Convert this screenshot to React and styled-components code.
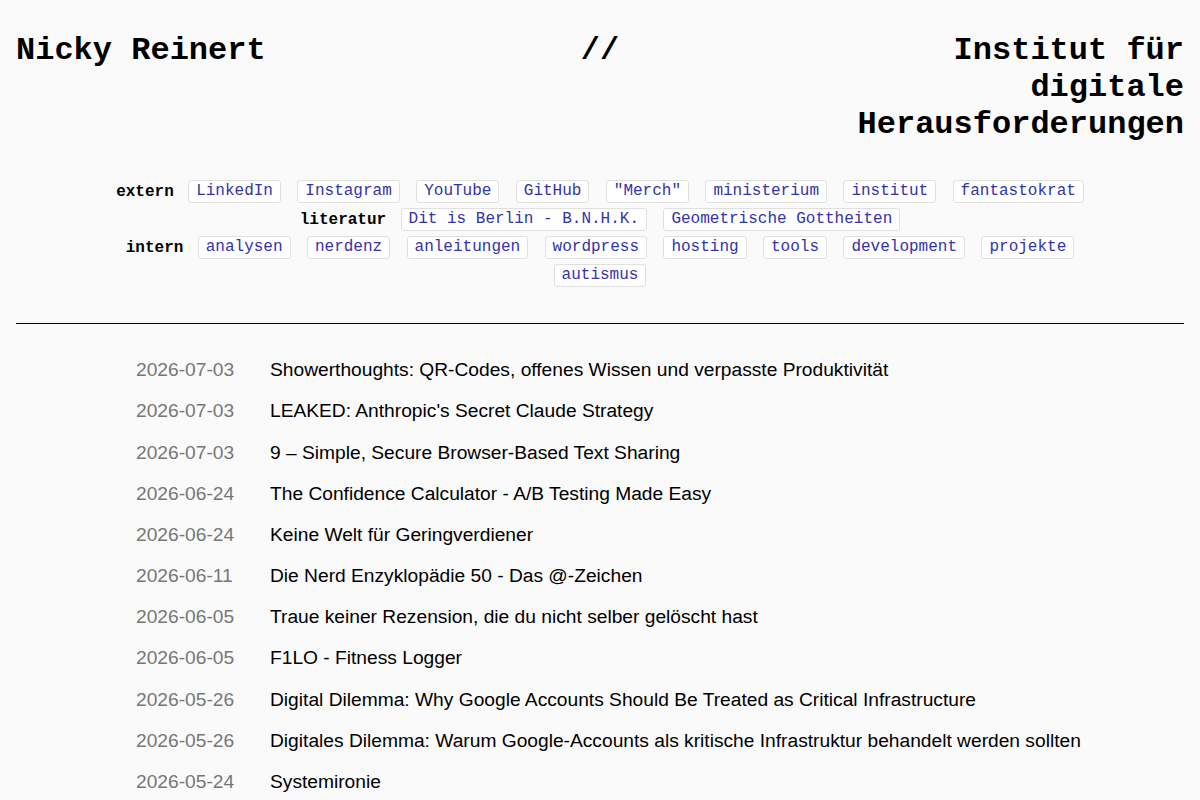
import styled, { createGlobalStyle } from "styled-components"

const GlobalStyle = createGlobalStyle`
    html, body {
        margin: 0;
        background: #fafafa;
        color: #000;
        font-family: "Liberation Sans", Arial, sans-serif;
    }
`

const Page = styled.div`
    padding: 32px 16px 0 16px;
`

const Header = styled.header`
    display: grid;
    grid-template-columns: 1fr 1fr 1fr;
    font-family: "Liberation Mono", "Courier New", monospace;
    font-weight: bold;
    font-size: 32px;
`

const HeaderCell = styled.div`
    text-align: ${props => props.align || "left"};
`

const Nav = styled.nav`
    margin: 37px auto 0 auto;
    max-width: 1000px;
    display: flex;
    flex-direction: column;
    gap: 5px;
    font-family: "Liberation Mono", "Courier New", monospace;
    font-size: 16px;
`

const NavGroup = styled.div`
    display: flex;
    flex-wrap: wrap;
    justify-content: center;
    align-items: center;
    gap: 5px 16.4px;
`

const NavLabel = styled.strong`
    font-weight: bold;
    margin-right: -2px;
`

const Tag = styled.a`
    display: inline-block;
    padding: 0 7px;
    height: 21px;
    line-height: 21px;
    color: #3333aa;
    background: #fff;
    border: 1px solid #e0e0e0;
    border-radius: 3px;
    text-decoration: none;
`

const Divider = styled.hr`
    margin: 36px 0 0 0;
    border: none;
    border-top: 1px solid #000;
`

const PostList = styled.ul`
    list-style: none;
    margin: 26px auto 0 auto;
    padding: 0 0 0 120px;
`

const PostRow = styled.li`
    display: flex;
    font-size: 19.2px;
    line-height: 28.8px;
    padding: 6.2px 0;
`

const PostDate = styled.span`
    color: #777;
    flex: 0 0 134px;
`

const PostTitle = styled.a`
    color: #000;
    text-decoration: none;
`

const extern = ["LinkedIn", "Instagram", "YouTube", "GitHub", "\"Merch\"", "ministerium", "institut", "fantastokrat"]
const literatur = ["Dit is Berlin - B.N.H.K.", "Geometrische Gottheiten"]
const intern = ["analysen", "nerdenz", "anleitungen", "wordpress", "hosting", "tools", "development", "projekte", "autismus"]

const posts = [
    ["2026-07-03", "Showerthoughts: QR-Codes, offenes Wissen und verpasste Produktivität"],
    ["2026-07-03", "LEAKED: Anthropic's Secret Claude Strategy"],
    ["2026-07-03", "9 – Simple, Secure Browser-Based Text Sharing"],
    ["2026-06-24", "The Confidence Calculator - A/B Testing Made Easy"],
    ["2026-06-24", "Keine Welt für Geringverdiener"],
    ["2026-06-11", "Die Nerd Enzyklopädie 50 - Das @-Zeichen"],
    ["2026-06-05", "Traue keiner Rezension, die du nicht selber gelöscht hast"],
    ["2026-06-05", "F1LO - Fitness Logger"],
    ["2026-05-26", "Digital Dilemma: Why Google Accounts Should Be Treated as Critical Infrastructure"],
    ["2026-05-26", "Digitales Dilemma: Warum Google-Accounts als kritische Infrastruktur behandelt werden sollten"],
    ["2026-05-24", "Systemironie"],
]

function App() {
    return (
        <Page>
            <GlobalStyle />
            <Header>
                <HeaderCell>Nicky Reinert</HeaderCell>
                <HeaderCell align="center">//</HeaderCell>
                <HeaderCell align="right">Institut für digitale Herausforderungen</HeaderCell>
            </Header>

            <Nav>
                <NavGroup>
                    <NavLabel>extern</NavLabel>
                    {extern.map(t => <Tag key={t} href="#">{t}</Tag>)}
                </NavGroup>
                <NavGroup>
                    <NavLabel>literatur</NavLabel>
                    {literatur.map(t => <Tag key={t} href="#">{t}</Tag>)}
                </NavGroup>
                <NavGroup>
                    <NavLabel>intern</NavLabel>
                    {intern.map(t => <Tag key={t} href="#">{t}</Tag>)}
                </NavGroup>
            </Nav>

            <Divider />

            <PostList>
                {posts.map((p, i) =>
                    <PostRow key={i}>
                        <PostDate>{p[0]}</PostDate>
                        <PostTitle href="#">{p[1]}</PostTitle>
                    </PostRow>
                )}
            </PostList>
        </Page>
    )
}

export default App
